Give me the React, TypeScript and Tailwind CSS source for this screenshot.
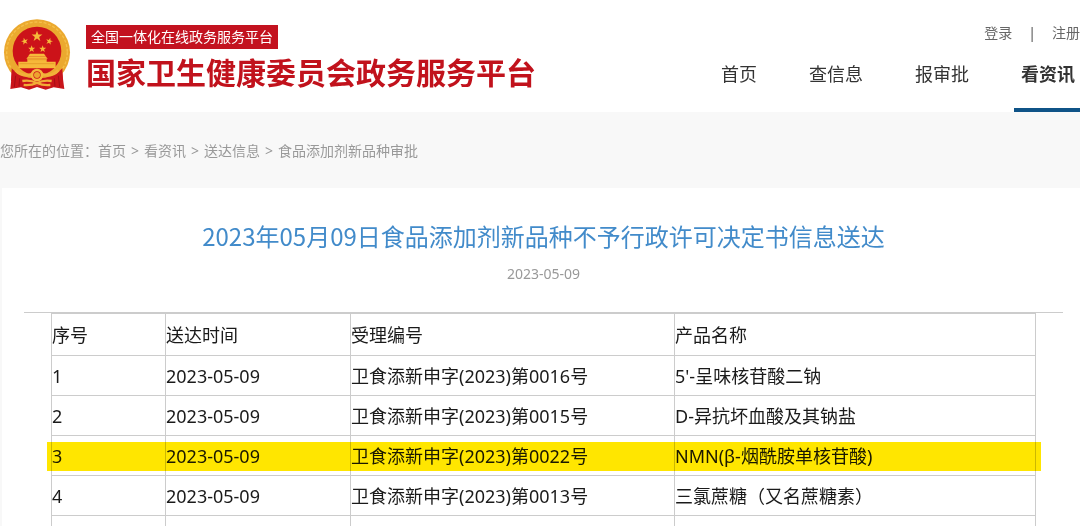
type NavItem = {
  label: string;
  active?: boolean;
};

type Delivery = {
  no: string;
  date: string;
  code: string;
  product: string;
  marked?: boolean;
};

const navItems: NavItem[] = [
  { label: "首页" },
  { label: "查信息" },
  { label: "报审批" },
  { label: "看资讯", active: true },
];

const crumbs = ["首页", "看资讯", "送达信息", "食品添加剂新品种审批"];

const columns = ["序号", "送达时间", "受理编号", "产品名称"];

const deliveries: Delivery[] = [
  { no: "1", date: "2023-05-09", code: "卫食添新申字(2023)第0016号", product: "5'-呈味核苷酸二钠" },
  { no: "2", date: "2023-05-09", code: "卫食添新申字(2023)第0015号", product: "D-异抗坏血酸及其钠盐" },
  {
    no: "3",
    date: "2023-05-09",
    code: "卫食添新申字(2023)第0022号",
    product: "NMN(β-烟酰胺单核苷酸)",
    marked: true,
  },
  { no: "4", date: "2023-05-09", code: "卫食添新申字(2023)第0013号", product: "三氯蔗糖（又名蔗糖素）" },
  { no: "", date: "", code: "", product: "" },
];

const STAR = "M0 -10 L2.4 -3.2 L9.5 -3.1 L3.8 1.2 L5.9 8.1 L0 4 L-5.9 8.1 L-3.8 1.2 L-9.5 -3.1 L-2.4 -3.2 Z";

const Emblem = () => (
  <svg viewBox="10 28 204 216" className="h-[72px] w-[68px] shrink-0" aria-hidden="true">
    <path d="M38 178 L32 238 L64 233 L88 240 L112 232 L138 240 L162 233 L194 238 L186 178 Z" fill="#c9151b" />
    <circle cx="112" cy="128" r="99" fill="#eba92f" />
    <circle cx="112" cy="128" r="91" fill="none" stroke="#f5c04a" strokeWidth="4" strokeDasharray="9 5" />
    <circle cx="112" cy="124" r="73" fill="#cc1219" />
    <path d="M36 176 Q60 206 112 206 Q164 206 188 176 L190 214 Q150 226 112 226 Q74 226 34 214 Z" fill="#c9151b" />
    <g fill="#f6b93a">
      <path d={STAR} transform="translate(112 80) scale(1.7)" />
      <path d={STAR} transform="translate(75 95) rotate(-15) scale(1.1)" />
      <path d={STAR} transform="translate(149 95) rotate(15) scale(1.1)" />
      <path d={STAR} transform="translate(96 118) scale(1.1)" />
      <path d={STAR} transform="translate(129 118) scale(1.1)" />
      <path d="M86 139 L91 132 H133 L138 139 Z" />
      <path d="M80 147 L86 140 H138 L144 147 Z" />
      <path d="M83 147 H141 V157 H83 Z" />
      <path d="M56 156 H168 V176 H56 Z" />
    </g>
    <path d="M60 162 H164 M84 150 H140" stroke="#e08f22" strokeWidth="2" />
    <path d="M48 182 Q66 202 96 194 M176 182 Q158 202 128 194" fill="none" stroke="#f2b03a" strokeWidth="9" />
    <circle cx="112" cy="196" r="15" fill="#cc1219" stroke="#f4b73c" strokeWidth="8" />
    <circle cx="112" cy="196" r="9" fill="#eda32f" />
    <path
      d="M68 214 Q92 210 112 220 Q132 210 156 214 M72 226 Q94 228 112 220 Q130 228 152 226"
      fill="none"
      stroke="#f2ad37"
      strokeWidth="7"
    />
    <path d="M48 198 L44 232 M60 206 L58 230 M176 198 L180 232 M164 206 L166 230" stroke="#a50e16" strokeWidth="3" />
  </svg>
);

const Header = () => (
  <header className="flex h-28 shrink-0 justify-between bg-white">
    <a href="#" className="flex items-start gap-[15px] pt-[19px] pl-[3px]">
      <Emblem />
      <span className="flex flex-col items-start pt-1.5">
        <span className="bg-[#c3121f] px-[5px] text-[14px] leading-6 whitespace-nowrap text-white">
          全国一体化在线政务服务平台
        </span>
        <span className="mt-1.5 text-[30px] leading-9 font-bold whitespace-nowrap text-[#c1121c]">
          国家卫生健康委员会政务服务平台
        </span>
      </span>
    </a>
    <div className="flex flex-col items-end justify-between">
      <div className="flex gap-4 pt-[23px] text-[14px] leading-5 text-[#666]">
        <a href="#">登录</a>
        <span className="text-[#555]">|</span>
        <a href="#">注册</a>
      </div>
      <nav className="flex gap-[38px]">
        {navItems.map((item) => (
          <a
            key={item.label}
            href="#"
            className={
              item.active
                ? "border-b-4 border-[#0f5387] pr-[5px] pb-5 pl-[7px] text-[18px] leading-7 font-bold whitespace-nowrap text-[#333]"
                : "border-b-4 border-transparent px-[7px] pb-5 text-[18px] leading-7 whitespace-nowrap text-[#333]"
            }
          >
            {item.label}
          </a>
        ))}
      </nav>
    </div>
  </header>
);

const Breadcrumb = () => (
  <nav className="flex h-[76px] shrink-0 items-center pt-0.5 text-[14px] leading-5 text-[#999]">
    <span>您所在的位置：</span>
    {crumbs.map((crumb, i) => (
      <span key={crumb} className="flex">
        {i > 0 && <span className="px-[5px]">&gt;</span>}
        <a href="#">{crumb}</a>
      </span>
    ))}
  </nav>
);

const DeliveryTable = () => (
  <table className="w-full table-fixed border-collapse text-left text-[18px] leading-6 text-[#1a1a1a]">
    <colgroup>
      <col className="w-[114px]" />
      <col className="w-[185px]" />
      <col className="w-[324px]" />
      <col />
    </colgroup>
    <thead>
      <tr className="h-[42px]">
        {columns.map((column) => (
          <th key={column} className="border border-[#ccc] p-0 font-normal">
            {column}
          </th>
        ))}
      </tr>
    </thead>
    <tbody>
      {deliveries.map((row) => (
        <tr key={row.no} className="relative h-10">
          <td className="border border-[#ccc] p-0">
            {row.no}
            {row.marked && (
              <span className="absolute inset-x-[-5px] top-[6px] bottom-[5px] bg-[#ffe600] mix-blend-multiply" />
            )}
          </td>
          <td className="border border-[#ccc] p-0">{row.date}</td>
          <td className="border border-[#ccc] p-0">{row.code}</td>
          <td className="border border-[#ccc] p-0">{row.product}</td>
        </tr>
      ))}
    </tbody>
  </table>
);

const App = () => {
  return (
    <div className="flex h-screen flex-col overflow-hidden bg-[#f8f8f8] font-['Noto_Sans','Noto_Sans_CJK_SC',sans-serif]">
      <Header />
      <Breadcrumb />
      <main className="ml-0.5 grow bg-white pt-7 pr-[17px] pl-[22px]">
        <h1 className="text-center font-['Noto_Sans_CJK_SC',sans-serif] text-[24px] leading-10 text-[#428bca]">
          2023年05月09日食品添加剂新品种不予行政许可决定书信息送达
        </h1>
        <p className="mt-2 text-center text-[14px] leading-5 text-[#999]">2023-05-09</p>
        <div className="mt-7 border-t border-[#ccc] px-[27px]">
          <DeliveryTable />
        </div>
      </main>
    </div>
  );
};

export default App;
